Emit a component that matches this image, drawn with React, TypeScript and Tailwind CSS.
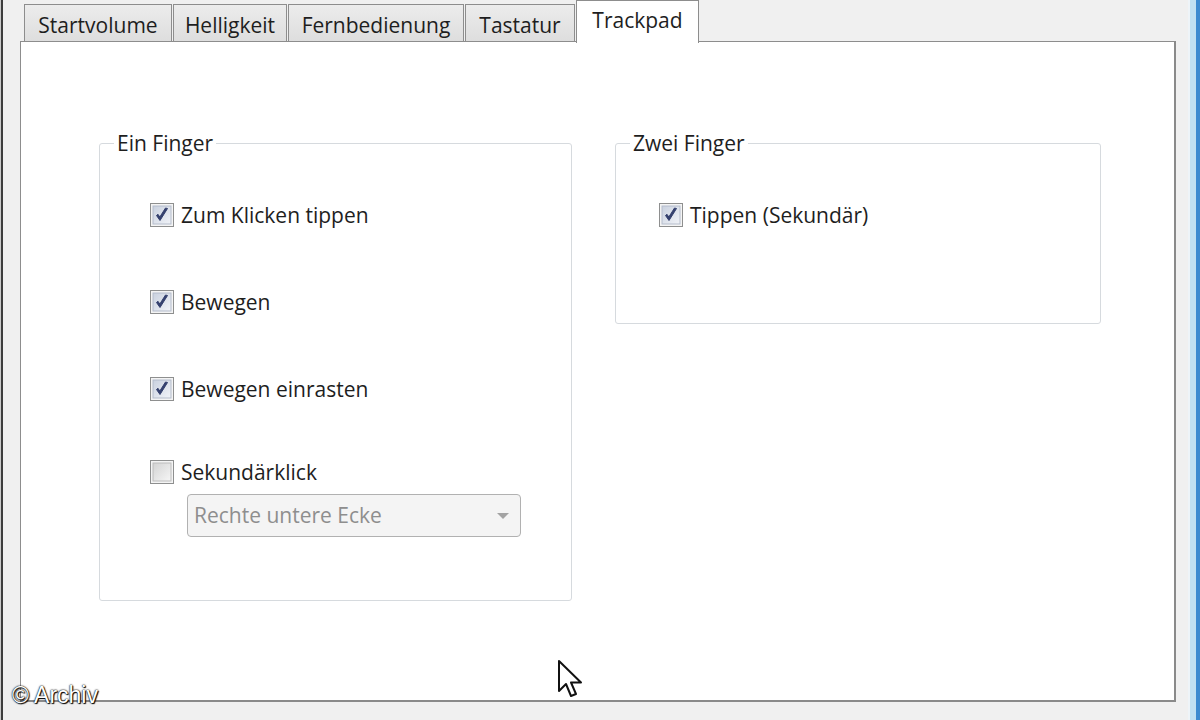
import React from "react";

const font = { fontFamily: '"Open Sans", "Noto Sans", sans-serif' };

// Vista-style checkbox drawn as svg
function CheckBox({ checked }: { checked: boolean }) {
    return (
        <svg width="24" height="24" viewBox="0 0 24 24" className="shrink-0">
            <defs>
                <linearGradient id={checked ? "cbOn" : "cbOff"} x1="0" y1="0" x2="1" y2="1">
                    <stop offset="0" stopColor={checked ? "#c9d1df" : "#d3d3d3"} />
                    <stop offset="1" stopColor={checked ? "#f1f3f8" : "#f6f6f6"} />
                </linearGradient>
            </defs>
            <rect x="0.5" y="0.5" width="23" height="23" fill="#f4f4f4" stroke="#8e8f8f" />
            <rect x="3" y="3" width="18" height="18" fill={`url(#${checked ? "cbOn" : "cbOff"})`} stroke={checked ? "#b4bccb" : "#bcbcbc"} strokeWidth="1" />
            {checked && (
                <path d="M6.5 12.5 L10 17.5 L17.5 5.5 L15.5 5 L9.8 14 L8 11.3 Z" fill="#34406e" stroke="#34406e" strokeWidth="1" strokeLinejoin="round" />
            )}
        </svg>
    );
}

function CheckRow({ label, checked }: { label: string; checked: boolean }) {
    return (
        <label className="flex h-[28px] items-center gap-[7px] text-[21px] leading-[28px] text-[#1e1e1e]">
            <CheckBox checked={checked} />
            <span>{label}</span>
        </label>
    );
}

const tabs = [
    { name: "Startvolume", w: "w-[148px]" },
    { name: "Helligkeit", w: "w-[114px]" },
    { name: "Fernbedienung", w: "w-[176px]" },
    { name: "Tastatur", w: "w-[110px]" },
];

export default function App() {
    return (
        <div className="relative flex h-[720px] w-[1200px] overflow-hidden bg-[#f0f0f0]" style={font}>
            {/* window frame left */}
            <div className="w-[1px] bg-[#c9c9c9]" />
            <div className="w-[2px] bg-[#3d3d3d]" />

            <div className="flex flex-1 flex-col pl-[17px] pr-[12px]">
                {/* Tab strip */}
                <div className="flex h-[41px] items-end gap-[1px] pl-[4px]">
                    {tabs.map((t) => (
                        <div
                            key={t.name}
                            className={`${t.w} flex h-[37px] items-center justify-center border border-b-0 border-[#8d8d8d] bg-gradient-to-b from-[#ececec] to-[#dedede] pt-[5px] text-[21px] text-[#1e1e1e]`}
                        >
                            {t.name}
                        </div>
                    ))}
                    <div className="relative z-10 -mb-[2px] flex h-[43px] w-[123px] items-start justify-center border border-b-0 border-[#8d8d8d] bg-white pt-[4px] text-[21px] text-[#1e1e1e]">
                        Trackpad
                    </div>
                </div>

                {/* Tab panel */}
                <div className="flex h-[661px] gap-[43px] border-t border-l border-r-2 border-b-2 border-t-[#8d8d8d] border-l-[#8d8d8d] border-r-[#8a8a8a] border-b-[#8a8a8a] bg-white pl-[78px] pt-[87px]">
                    <fieldset className="h-[472px] w-[473px] rounded-[3px] border border-[#d6dade] px-0">
                        <legend className="ml-[14px] px-[3px] text-[21px] leading-[28px] text-[#1e1e1e]">Ein Finger</legend>
                        <div className="flex flex-col pl-[50px] pt-[44px]">
                            <CheckRow label="Zum Klicken tippen" checked />
                            <div className="h-[59px]" />
                            <CheckRow label="Bewegen" checked />
                            <div className="h-[59px]" />
                            <CheckRow label="Bewegen einrasten" checked />
                            <div className="h-[55px]" />
                            <CheckRow label="Sekundärklick" checked={false} />
                            <div className="ml-[37px] mt-[8px] flex h-[43px] w-[334px] items-center justify-between rounded-[4px] border border-[#b1b1b1] bg-[#f4f4f4] pl-[6px] pr-[10px] text-[21px] text-[#8e8e8e]">
                                <span>Rechte untere Ecke</span>
                                <svg width="14" height="8" viewBox="0 0 14 8">
                                    <path d="M1 1 L13 1 L7 7 Z" fill="#a3a3a3" />
                                </svg>
                            </div>
                        </div>
                    </fieldset>

                    <fieldset className="h-[195px] w-[486px] rounded-[3px] border border-[#d6dade] px-0">
                        <legend className="ml-[14px] px-[3px] text-[21px] leading-[28px] text-[#1e1e1e]">Zwei Finger</legend>
                        <div className="flex flex-col pl-[43px] pt-[44px]">
                            <CheckRow label="Tippen (Sekundär)" checked />
                        </div>
                    </fieldset>
                </div>
            </div>

            {/* window frame right */}
            <div className="w-[2px] bg-[#eef4f8]" />
            <div className="w-[6px] bg-[#bfe0f2]" />
            <div className="w-[4px] bg-[#3b8ad0]" />

            {/* mouse pointer */}
            <svg className="pointer-events-none absolute left-[557px] top-[659px]" width="30" height="42" viewBox="0 0 30 42">
                <path d="M2 2 L2 32 L9 25 L14 37 L19 35 L14 23.5 L24 23.5 Z" fill="#ffffff" stroke="#111111" strokeWidth="2" strokeLinejoin="round" />
            </svg>

            {/* watermark */}
            <div
                className="pointer-events-none absolute left-[12px] top-[681px] text-[23px] leading-[28px] text-white [text-shadow:0_0_2px_#000,0_0_1px_#000,1px_1px_1px_#000]"
                style={{ fontFamily: '"Liberation Sans", Arial, sans-serif' }}
            >
                © Archiv
            </div>
        </div>
    );
}
